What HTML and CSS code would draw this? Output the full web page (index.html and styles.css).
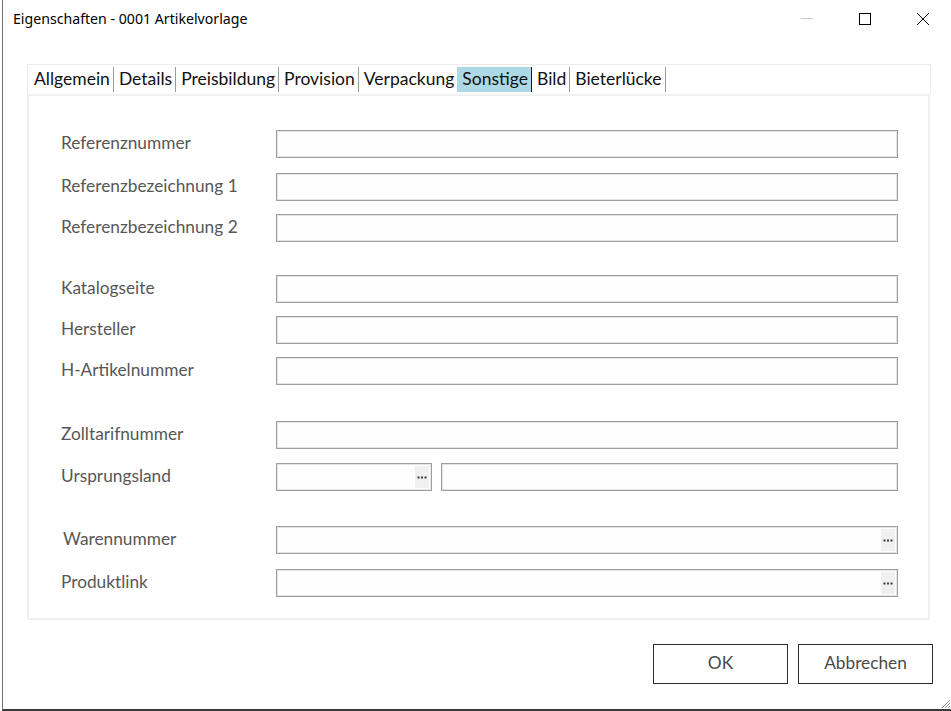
FILE: index.html
```html
<!DOCTYPE html>
<html lang="de">
<head>
<meta charset="utf-8">
<title>Eigenschaften - 0001 Artikelvorlage</title>
<link rel="stylesheet" href="styles.css">
</head>
<body>
<div class="window">
  <div class="titlebar">
    <div class="title">Eigenschaften - 0001 Artikelvorlage</div>
    <div class="controls">
      <div class="ctrl"><svg width="14" height="14" viewBox="0 0 14 14"><line x1="1" y1="6.5" x2="13" y2="6.5" stroke="#c8c8c8" stroke-width="1"/></svg></div>
      <div class="ctrl"><svg width="14" height="14" viewBox="0 0 14 14"><rect x="1.5" y="1.5" width="11" height="11" fill="none" stroke="#000" stroke-width="1"/></svg></div>
      <div class="ctrl"><svg width="14" height="14" viewBox="0 0 14 14"><path d="M1 1 L13 13 M13 1 L1 13" stroke="#000" stroke-width="1" fill="none"/></svg></div>
    </div>
  </div>

  <div class="tabpanel">
    <div class="tabstrip">
      <div class="tab">Allgemein</div>
      <div class="tab">Details</div>
      <div class="tab">Preisbildung</div>
      <div class="tab">Provision</div>
      <div class="tab">Verpackung</div>
      <div class="tab active">Sonstige</div>
      <div class="tab">Bild</div>
      <div class="tab">Bieterlücke</div>
    </div>
    <div class="content">
      <div class="row r1"><label class="lbl">Referenznummer</label><div class="field"></div></div>
      <div class="row r2"><label class="lbl">Referenzbezeichnung 1</label><div class="field"></div></div>
      <div class="row r3"><label class="lbl">Referenzbezeichnung 2</label><div class="field"></div></div>

      <div class="row r4"><label class="lbl">Katalogseite</label><div class="field"></div></div>
      <div class="row r3"><label class="lbl">Hersteller</label><div class="field"></div></div>
      <div class="row r3"><label class="lbl">H-Artikelnummer</label><div class="field"></div></div>

      <div class="row r7"><label class="lbl">Zolltarifnummer</label><div class="field"></div></div>
      <div class="row r8"><label class="lbl">Ursprungsland</label>
        <div class="pair">
          <div class="field small"><span class="dots"><svg width="10" height="3" viewBox="0 0 10 3"><rect x="0.5" y="0.5" width="2" height="2" fill="#3a3a3a"/><rect x="4" y="0.5" width="2" height="2" fill="#3a3a3a"/><rect x="7.5" y="0.5" width="2" height="2" fill="#3a3a3a"/></svg></span></div>
          <div class="field"></div>
        </div>
      </div>

      <div class="row r9"><label class="lbl shift">Warennummer</label><div class="field"><span class="dots"><svg width="10" height="3" viewBox="0 0 10 3"><rect x="0.5" y="0.5" width="2" height="2" fill="#3a3a3a"/><rect x="4" y="0.5" width="2" height="2" fill="#3a3a3a"/><rect x="7.5" y="0.5" width="2" height="2" fill="#3a3a3a"/></svg></span></div></div>
      <div class="row r2"><label class="lbl">Produktlink</label><div class="field"><span class="dots"><svg width="10" height="3" viewBox="0 0 10 3"><rect x="0.5" y="0.5" width="2" height="2" fill="#3a3a3a"/><rect x="4" y="0.5" width="2" height="2" fill="#3a3a3a"/><rect x="7.5" y="0.5" width="2" height="2" fill="#3a3a3a"/></svg></span></div></div>
    </div>
  </div>

  <div class="buttons">
    <button class="btn">OK</button>
    <button class="btn">Abbrechen</button>
  </div>

  <svg class="grip" width="11" height="11" viewBox="0 0 11 11">
    <path d="M10 2 L2 10 M10 5 L5 10 M10 8 L8 10" stroke="#8a8a8a" stroke-width="1"/>
  </svg>
</div>
</body>
</html>
```

FILE: styles.css
```css
* { box-sizing: border-box; }

html, body {
  margin: 0;
  padding: 0;
  background: #ffffff;
}

body {
  width: 951px;
  height: 711px;
  overflow: hidden;
  font-family: "Lato", "Open Sans", sans-serif;
}

.window {
  position: relative;
  margin-left: 2px;
  width: 949px;
  height: 711px;
  border-left: 1px solid #707070;
  border-bottom: 2px solid #3a3a3a;
  background: #ffffff;
  display: flex;
  flex-direction: column;
}

.titlebar {
  height: 40px;
  display: flex;
  align-items: flex-start;
  justify-content: space-between;
}

.title {
  font-family: "Noto Sans", "Open Sans", sans-serif;
  font-size: 14.15px;
  color: #000;
  padding-left: 10px;
  padding-top: 9px;
  line-height: 20px;
}

.controls {
  display: flex;
  margin-right: -1px;
}

.ctrl {
  width: 58px;
  height: 38px;
  display: flex;
  align-items: center;
  justify-content: center;
}

.tabpanel {
  margin-top: 24px;
  margin-left: 24px;
  width: 904px;
}

.tabstrip {
  height: 30px;
  border: 1px solid #ececec;
  border-bottom: none;
  display: flex;
  align-items: center;
  padding-left: 1px;
}

.tab {
  font-size: 17.5px;
  color: #111;
  height: 25px;
  line-height: 23px;
  padding: 0 3px 0 5px;
  border-right: 1px solid #9a9a9a;
}

.tab.active {
  background: #add8e6;
  margin-left: -1px;
  padding-left: 5px;
  border-right: 1px solid #1a1a1a;
}

.content {
  border: 2px solid #f0f0f0;
  width: 903px;
  height: 526px;
  padding: 34px 0 0 32px;
}

.row {
  display: flex;
  align-items: center;
  height: 28px;
}

.r2 { margin-top: 15px; }
.r3 { margin-top: 13px; }
.r4 { margin-top: 33px; }
.r7 { margin-top: 36px; }
.r8 { margin-top: 14px; }
.r9 { margin-top: 35px; }

.lbl {
  width: 215px;
  flex: none;
  font-size: 17.3px;
  line-height: 22px;
  padding-bottom: 2px;
  color: #575757;
}

.lbl.shift { padding-left: 2px; }

.field {
  width: 622px;
  height: 28px;
  border: 1px solid #9f9f9f;
  box-shadow: inset 0 0 0 1px #e4e4e4;
  background: #fefefe;
  display: flex;
  justify-content: flex-end;
  align-items: center;
  padding-right: 2px;
}

.pair {
  display: flex;
  gap: 9px;
  width: 622px;
}

.pair .field { width: auto; flex: 1; }
.pair .field.small { width: 156px; flex: none; }

.dots {
  width: 14px;
  height: 22px;
  background: #f0f0f0;
  display: flex;
  align-items: center;
  justify-content: center;
}

.dots svg { display: block; }

.buttons {
  display: flex;
  justify-content: flex-end;
  gap: 10px;
  margin-top: 24px;
  padding-right: 18px;
}

.btn {
  width: 135px;
  height: 40px;
  border: 1px solid #2e2e2e;
  background: #ffffff;
  font-family: "Lato", "Open Sans", sans-serif;
  font-size: 17.3px;
  color: #4a4a4a;
  padding: 0 0 4px 0;
}

.grip {
  position: absolute;
  right: 0;
  bottom: 0;
}
```
